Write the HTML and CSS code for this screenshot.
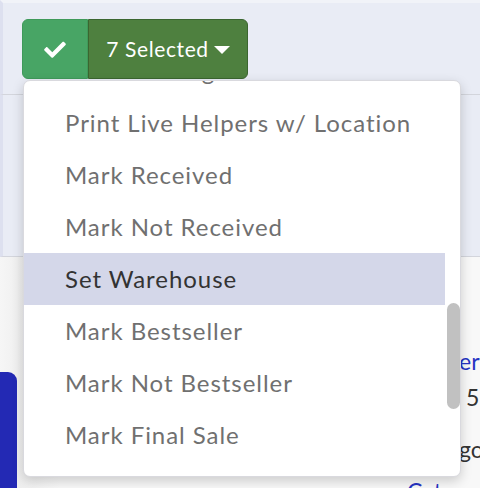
FILE: index.html
```html
<!DOCTYPE html>
<html>
<head>
<meta charset="utf-8">
<link rel="stylesheet" href="styles.css">
</head>
<body>
<div class="page">
  <div class="toolbar">
    <div class="btn-group">
      <button class="btn btn-check" type="button">
        <svg width="22" height="17" viewBox="0 0 512 400" aria-hidden="true"><path fill="#fff" d="M173.9 389.4L7.5 223c-10-10-10-26.2 0-36.2l36.2-36.2c10-10 26.2-10 36.2 0L192 262.7 432.1 22.6c10-10 26.2-10 36.2 0l36.2 36.2c10 10 10 26.2 0 36.2L210.1 389.4c-10 10-26.2 10-36.2 0z"/></svg>
      </button>
      <button class="btn btn-toggle" type="button">7 Selected <span class="caret"></span></button>
    </div>
  </div>
  <div class="filters"></div>
  <div class="content">
    <div class="side-card"></div>
    <div class="rows">
      <div class="row link r1">er</div>
      <div class="row r2">5</div>
      <div class="row r3">go</div>
      <div class="row link r4">Cat</div>
    </div>
  </div>

  <div class="dropdown">
    <ul class="menu">
      <li>Print Packing List</li>
      <li>Print Live Helpers w/ Location</li>
      <li>Mark Received</li>
      <li>Mark Not Received</li>
      <li class="active">Set Warehouse</li>
      <li>Mark Bestseller</li>
      <li>Mark Not Bestseller</li>
      <li>Mark Final Sale</li>
      <li>Mark Not Final Sale</li>
    </ul>
    <div class="scroll-thumb"></div>
  </div>
</div>
</body>
</html>
```
FILE: styles.css
```css
html, body {
  margin: 0;
  padding: 0;
}
body {
  width: 480px;
  height: 488px;
  overflow: hidden;
  font-family: Lato, "Open Sans", sans-serif;
  background: #f4f4f4;
}
.page {
  position: relative;
  height: 488px;
}
.toolbar {
  height: 95px;
  box-sizing: border-box;
  background: #e9ecf5;
  border-top: 3px solid #f1f3f8;
  border-left: 3px solid #dde0ef;
  border-bottom: 1px solid #d3d5dc;
  padding: 16px 0 0 19px;
}
.btn-group {
  display: flex;
  height: 60px;
}
.btn {
  margin: 0;
  border: 1px solid transparent;
  font-family: inherit;
  color: #fff;
  display: flex;
  align-items: center;
  justify-content: center;
  box-sizing: border-box;
  height: 60px;
}
.btn-check {
  width: 66px;
  background: #48a565;
  border-color: #3f9a5a;
  border-radius: 6px 0 0 6px;
  padding: 0;
}
.btn-toggle {
  width: 160px;
  background: #4e803f;
  border-color: #3b6630;
  border-radius: 0 6px 6px 0;
  font-size: 21px;
  letter-spacing: 0.6px;
  padding: 0 0 1px 0;
  gap: 5px;
}
.caret {
  width: 0;
  height: 0;
  border-left: 8px solid transparent;
  border-right: 8px solid transparent;
  border-top: 8px solid #fff;
  margin-top: 2px;
}
.filters {
  height: 161px;
  background: #e9ecf5;
  border-left: 3px solid #dde0ef;
  border-bottom: 1px solid #d3d5dc;
}
.content {
  display: flex;
  background: linear-gradient(to right, #f6f6f6, #efefef 20px, #f8f8f8 60px);
  height: 231px;
}
.side-card {
  flex-shrink: 0;
  width: 17px;
  height: 116px;
  margin-top: 115px;
  background: #2329b4;
  border-radius: 0 9px 0 0;
}
.rows {
  flex-shrink: 0;
  margin-left: 390px;
  padding-top: 90px;
  font-size: 23px;
  color: #333;
  line-height: 28px;
  white-space: nowrap;
}
.row { height: 28px; }
.row.link { color: #2634c3; }
.r1 { padding-left: 52px; }
.r2 { padding-left: 59px; margin-top: 8px; }
.r3 { padding-left: 52px; margin-top: 24px; }
.r4 { margin-top: 14px; }

.dropdown {
  position: absolute;
  left: 23px;
  top: 80px;
  width: 438px;
  height: 397px;
  background: #fff;
  border: 1px solid #d9d9de;
  border-radius: 7px;
  box-shadow: 0 4px 12px rgba(0, 0, 0, 0.18);
  overflow: hidden;
  box-sizing: border-box;
}
.menu {
  list-style: none;
  margin: -36px 0 0 0;
  padding: 0;
  width: 421px;
}
.menu li {
  height: 52px;
  line-height: 52px;
  padding-left: 41px;
  font-size: 24px;
  letter-spacing: 0.95px;
  color: #707070;
  white-space: nowrap;
}
.menu li.active {
  background: #d4d7e9;
  color: #333;
}
.scroll-thumb {
  position: absolute;
  left: 423px;
  top: 222px;
  width: 13px;
  height: 106px;
  border-radius: 7px;
  background: #c1c1c1;
}
```
